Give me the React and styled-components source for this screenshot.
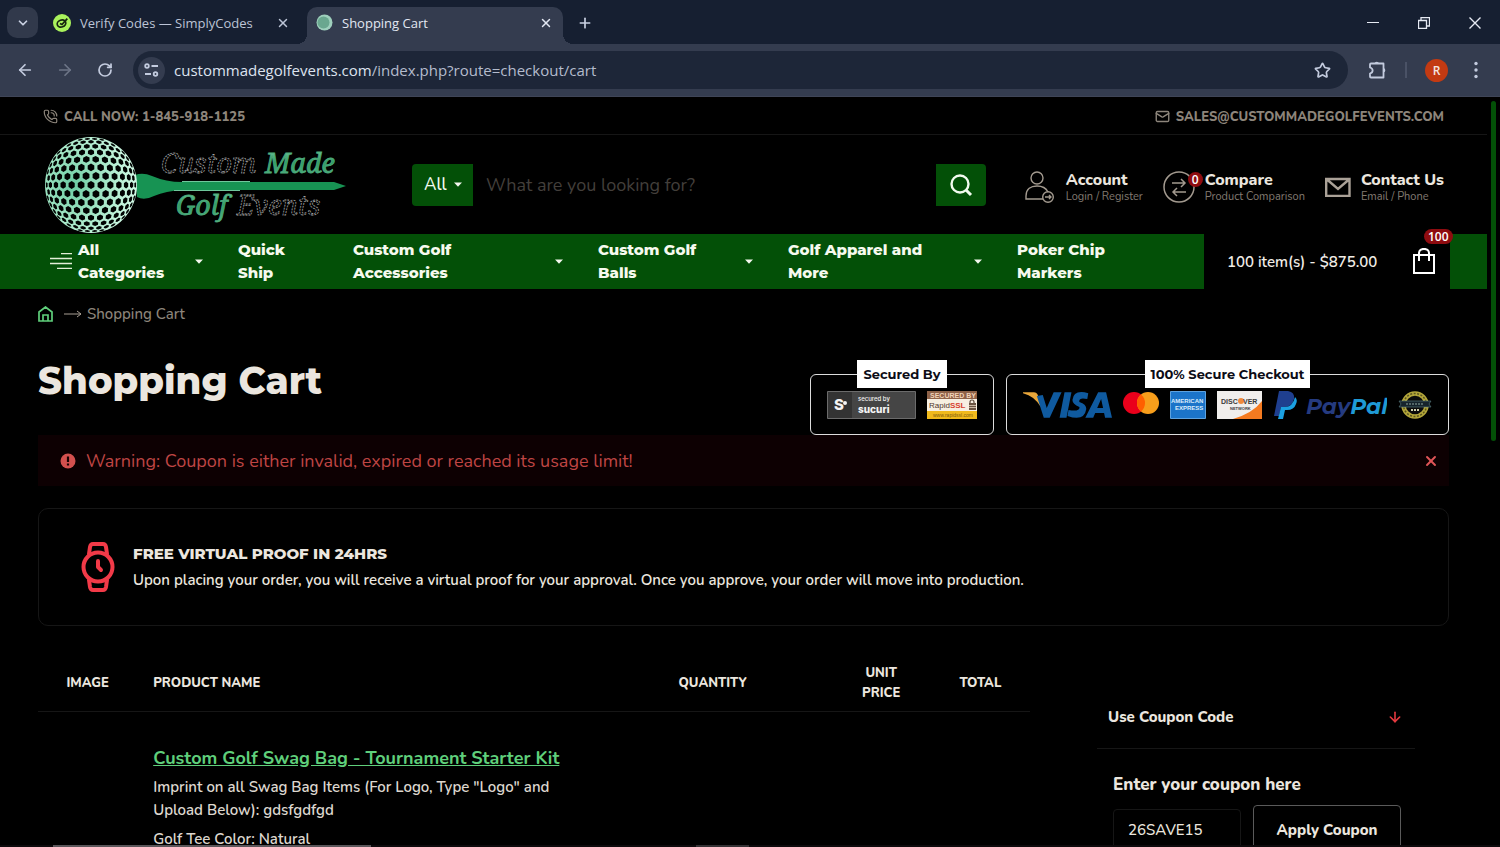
import React, { useState } from "react";
import styled, { createGlobalStyle } from "styled-components";
import {
  ArrowDown,
  ArrowLeft,
  ArrowRight,
  ChevronDown,
  Mail,
  PhoneCall,
  Plus,
  RotateCw,
  Star,
  X,
} from "lucide-react";

const navItems = [
  { lines: ["Quick", "Ship"] },
  { lines: ["Custom Golf", "Accessories"], caret: true },
  { lines: ["Custom Golf", "Balls"], caret: true },
  { lines: ["Golf Apparel and", "More"], caret: true },
  { lines: ["Poker Chip", "Markers"] },
];

// dark hexagons projected onto the ball
function ballCells() {
  const cells = [];
  const R = 46;
  const step = 10;
  const project = (x, y) => {
    const d = Math.hypot(x, y);
    if (d === 0) return [0, 0];
    const a = Math.min(d / R, Math.PI / 2);
    const k = (Math.sin(a) * R) / d;
    return [x * k, y * k];
  };
  for (let row = -9; row <= 9; row++) {
    for (let col = -9; col <= 9; col++) {
      const cx = col * step + (row % 2 ? step / 2 : 0);
      const cy = row * step * 0.87;
      if (Math.hypot(cx, cy) > R * 1.4) continue;
      const pts = [];
      for (let i = 0; i < 6; i++) {
        const t = (Math.PI / 3) * i + Math.PI / 6;
        const p = project(cx + 3.9 * Math.cos(t), cy + 3.9 * Math.sin(t));
        pts.push(`${(p[0] + 47).toFixed(1)},${(p[1] * 1.04 + 49).toFixed(1)}`);
      }
      cells.push(pts.join(" "));
    }
  }
  return cells;
}

function Logo() {
  return (
    <svg width="304" height="98" viewBox="0 0 304 98" role="img" aria-label="Custom Made Golf Events">
      <defs>
        <radialGradient id="ball" cx="0.3" cy="0.5" r="0.7">
          <stop offset="0" stopColor="#6bcca3" />
          <stop offset="0.5" stopColor="#a2e6c5" />
          <stop offset="1" stopColor="#d2fae6" />
        </radialGradient>
        <linearGradient id="lettering" x1="0" y1="0" x2="0" y2="1">
          <stop offset="0" stopColor="#8fd6b3" />
          <stop offset="0.5" stopColor="#2f9c66" />
          <stop offset="1" stopColor="#57b587" />
        </linearGradient>
      </defs>
      <path d="M91 39 Q99 36 108 40 Q122 46 138 46 L290 46 L302 50 L290 54 L138 54 Q122 55 110 60 Q100 65 93 61 Z" fill="#179353" />
      <path d="M138 45.500H206M130 54.500H196" stroke="#6fc79c" />
      <ellipse cx="47" cy="49" rx="46" ry="48" fill="url(#ball)" />
      {ballCells().map((points) => (
        <polygon key={points} points={points} fill="#010302" />
      ))}
      <g fontFamily="'Noto Serif', 'DejaVu Serif', 'Liberation Serif', serif" fontStyle="italic" fontSize="27" strokeWidth="0.8">
        <text x="117" y="37" fill="#000" stroke="#a2a2a2" strokeDasharray="2 1">Custom</text>
        <text x="221" y="37" fill="url(#lettering)" stroke="#4dab7c">Made</text>
        <text x="132" y="79" fill="url(#lettering)" stroke="#4dab7c">Golf</text>
        <text x="193" y="79" fill="#000" stroke="#a2a2a2" strokeDasharray="2 1">Events</text>
      </g>
    </svg>
  );
}

function Caret() {
  return (
    <svg width="8" height="5" viewBox="0 0 8 5" aria-hidden="true">
      <path d="M0 0.500H8L4 4.800Z" fill="#f4f7ee" />
    </svg>
  );
}

function SimplyCodesIcon() {
  return (
    <svg width="18" height="18" viewBox="0 0 18 18" aria-hidden="true">
      <circle cx="9" cy="9" r="9" fill="#a9f25c" />
      <ellipse cx="8.500" cy="9.500" rx="4.400" ry="3.400" transform="rotate(-20 8.500 9.500)" fill="none" stroke="#17260f" strokeWidth="1.700" />
      <path d="M7 9.500L9 10.500L14.300 4.600" fill="none" stroke="#17260f" strokeWidth="1.800" />
    </svg>
  );
}

function PaymentLogos() {
  return (
    <LogoRow>
      <svg width="89" height="28" viewBox="0 0 90 28" role="img" aria-label="Visa">
        <path d="M0 1H11Q14 1 15 4L18 16Q12 5 0 2Z" fill="#e9a63a" />
        <path d="M14 5L21 27H27L39 1H31L24 17L20 4Z" fill="#0f5a9f" />
        <path d="M42 1H49L44 27H37Z" fill="#0f5a9f" />
        <path d="M66 2Q51 -2 50 9Q50 13 57 16Q58 21 46 19L45 25Q62 31 64 18Q64 13 57 11Q56 6 65 8Z" fill="#0f5a9f" />
        <path fillRule="evenodd" d="M63 27L76 1H84L90 27H83L82 22H73L71 27ZM75 17H81L79 8Z" fill="#0f5a9f" />
      </svg>
      <svg width="36" height="28" viewBox="0 0 36 28" role="img" aria-label="Mastercard">
        <circle cx="11" cy="12" r="11" fill="#ea001b" />
        <circle cx="25" cy="12" r="11" fill="#f79e1b" />
        <path d="M18 3.500A11 11 0 0 1 18 20.500A11 11 0 0 1 18 3.500Z" fill="#ff5f00" />
      </svg>
      <svg width="36" height="28" viewBox="0 0 36 28" role="img" aria-label="American Express">
        <path fill="#1b74c9" stroke="#5da2df" d="M0.500 0.500H35.500V27.500H0.500Z" />
        <g fontFamily="'Liberation Sans', sans-serif" fontWeight="bold" fontSize="6" fill="#dcedfb">
          <text x="1" y="12">AMERICAN</text>
          <text x="5" y="19">EXPRESS</text>
        </g>
      </svg>
      <svg width="45" height="28" viewBox="0 0 45 28" role="img" aria-label="Discover">
        <path fill="#f0eeec" d="M0 0H45V28H0Z" />
        <path d="M45 10Q36 22 16 28H45Z" fill="#f47a20" />
        <circle cx="24" cy="10" r="3" fill="#f08a3c" />
        <g fontFamily="'Liberation Sans', sans-serif" fontWeight="bold" fill="#3a3a3a">
          <text x="4" y="13" fontSize="7">DISC</text>
          <text x="26" y="13" fontSize="7">VER</text>
          <text x="13" y="19" fontSize="4">NETWORK</text>
        </g>
      </svg>
      <svg width="114" height="28" viewBox="0 0 114 28" role="img" aria-label="PayPal">
        <path d="M6 0H15Q22 1 21 8Q19 16 11 16H8L6 25H1Z" fill="#1f3f8f" />
        <path d="M22 6Q25 9 23 13Q21 19 14 19H12L10 28H5L6 24L8 16H11Q20 16 22 6Z" fill="#1ba0e2" />
        <text x="33" y="23" fontFamily="Montserrat, Lato, sans-serif" fontWeight="700" fontStyle="italic" fontSize="22" fill="#253b80">
          Pay<tspan fill="#1f9ad6">Pal</tspan>
        </text>
      </svg>
      <svg width="34" height="28" viewBox="0 0 34 28" role="img" aria-label="Secure checkout seal">
        <circle cx="17" cy="14" r="11.500" fill="#0b0b0b" stroke="#b3a63a" strokeWidth="4.500" />
        <circle cx="17" cy="14" r="11.500" fill="none" stroke="#5b551f" strokeWidth="1.500" strokeDasharray="2 1.500" />
        <path d="M1 10H33L31 13L33 16H1L3 13Z" fill="#16242c" stroke="#5f8387" strokeWidth="0.600" />
        <path d="M8 13H26" stroke="#8fa8a0" strokeDasharray="2 1" />
        <path d="M13 19H21" stroke="#cfcfae" strokeWidth="2" strokeDasharray="2 1" />
      </svg>
    </LogoRow>
  );
}

function SecurityLogos() {
  return (
    <LogoRow>
      <svg width="89" height="28" viewBox="0 0 89 28" role="img" aria-label="Secured by Sucuri">
        <path fill="#454545" stroke="#6b6b6b" d="M0.500 0.500H88.500V27.500H0.500Z" />
        <path fill="#333" d="M1 1H25V27H1Z" />
        <g fontFamily="Inter, sans-serif" fontWeight="800" fill="#f4f4f4">
          <text x="7" y="19" fontSize="15">S</text>
          <text x="31" y="10" fontSize="6" fontWeight="500">secured by</text>
          <text x="31" y="22" fontSize="10">sucuri</text>
        </g>
        <circle cx="18" cy="12" r="2" fill="#f4f4f4" />
      </svg>
      <svg width="50" height="28" viewBox="0 0 50 28" role="img" aria-label="Secured by RapidSSL">
        <path fill="#f7efe2" d="M0 0H50V28H0Z" />
        <path fill="#8e6248" d="M0 0H50V8H0Z" />
        <path fill="#f0b91c" d="M0 20H50V28H0Z" />
        <path d="M43 13V11Q43 9 45 9Q47 9 47 11V13" fill="none" stroke="#5e4a3c" strokeWidth="1.200" />
        <path fill="#6b5443" d="M42 12H49V19H42Z" />
        <path d="M42 14.500H49M42 16.500H49" stroke="#cbb8a4" />
        <g fontFamily="'Liberation Sans', sans-serif">
          <text x="3" y="7" fontSize="7" fontWeight="bold" fill="#f1d3b8">SECURED BY</text>
          <text x="2" y="17" fontSize="8" fill="#50352c">Rapid<tspan fill="#d8402f" fontWeight="bold">SSL</tspan></text>
          <text x="6" y="26" fontSize="5" fill="#7d5a10">www.rapidssl.com</text>
        </g>
      </svg>
    </LogoRow>
  );
}

function Browser() {
  return (
    <>
      <TabStrip>
        <TabSearch aria-label="Search tabs"><ChevronDown size={14} strokeWidth={3} /></TabSearch>
        <Tab>
          <SimplyCodesIcon />
          <span>Verify Codes — SimplyCodes</span>
          <IconButton aria-label="Close Verify Codes"><X size={14} strokeWidth={2.5} /></IconButton>
        </Tab>
        <Tab $active>
          <svg width="17" height="17" viewBox="0 0 17 17" aria-hidden="true">
            <circle cx="8.500" cy="8.500" r="8" fill="#9fd0bd" />
            <circle cx="7.500" cy="8.500" r="6" fill="#6aa78f" />
          </svg>
          <span>Shopping Cart</span>
          <IconButton aria-label="Close Shopping Cart"><X size={14} strokeWidth={2.5} /></IconButton>
        </Tab>
        <NewTab aria-label="New tab"><Plus size={16} strokeWidth={2.5} /></NewTab>
        <WindowButtons>
          <button aria-label="Minimize"><svg width="12" height="12"><path d="M0 5.500H12" stroke="currentColor" /></svg></button>
          <button aria-label="Restore">
            <svg width="12" height="12" fill="none" stroke="currentColor"><path d="M0.500 3.500H8.500V11.500H0.500ZM3 3V0.500H11.500V9H9" strokeWidth="1.300" /></svg>
          </button>
          <button aria-label="Close window">
            <svg width="12" height="12" stroke="currentColor" strokeWidth="1.400"><path d="M0.500 0.500L11.500 11.500M11.500 0.500L0.500 11.500" /></svg>
          </button>
        </WindowButtons>
      </TabStrip>
      <Toolbar>
        <ToolButton aria-label="Back"><ArrowLeft size={18} strokeWidth={2.3} /></ToolButton>
        <ToolButton aria-label="Forward" $dim><ArrowRight size={18} strokeWidth={2.3} /></ToolButton>
        <ToolButton aria-label="Reload"><RotateCw size={16} strokeWidth={2.6} /></ToolButton>
        <Omnibox>
          <SiteInfo aria-label="Site information">
            <svg width="15" height="14" viewBox="0 0 15 14" fill="none" stroke="currentColor" strokeWidth="1.800">
              <circle cx="3" cy="3" r="1.800" /><path d="M7.500 3H14M1 11H7" /><circle cx="11.500" cy="11" r="1.800" />
            </svg>
          </SiteInfo>
          <Address>custommadegolfevents.com<span>/index.php?route=checkout/cart</span></Address>
          <IconButton aria-label="Bookmark this tab"><Star size={17} strokeWidth={2.4} /></IconButton>
        </Omnibox>
        <BrowserActions>
          <IconButton aria-label="Extensions">
            <svg width="20" height="20" viewBox="0 0 20 20">
              <path d="M4 3.500H16.500V17.500H4Q3 17.500 3 16.500V13.500C6.500 12.500 6.500 8.500 3 7.500V4.500Q3 3.500 4 3.500Z" fill="none" stroke="currentColor" strokeWidth="1.800" strokeLinejoin="round" />
              <path d="M7.500 3.500A2.300 2.300 0 0 1 12 3.500ZM16.500 8A2.300 2.300 0 0 1 16.500 12.500Z" fill="currentColor" />
            </svg>
          </IconButton>
          <ToolbarDivider />
          <Avatar aria-label="Profile">R</Avatar>
          <IconButton aria-label="Menu">
            <svg width="20" height="18" viewBox="0 0 20 18" fill="currentColor">
              <circle cx="10" cy="2.500" r="1.700" /><circle cx="10" cy="9" r="1.700" /><circle cx="10" cy="15.500" r="1.700" />
            </svg>
          </IconButton>
        </BrowserActions>
      </Toolbar>
    </>
  );
}

function SiteHeader() {
  return (
    <header>
      <TopBar>
        <a href="tel:18459181125"><PhoneCall size={15} strokeWidth={1.9} />CALL NOW: 1-845-918-1125</a>
        <a href="mailto:sales@custommadegolfevents.com"><Mail size={15} strokeWidth={2.2} />SALES@CUSTOMMADEGOLFEVENTS.COM</a>
      </TopBar>
      <HeaderRow>
        <a href="/"><Logo /></a>
        <SearchForm onSubmit={(e) => e.preventDefault()}>
          <CategoryPicker>
            <select aria-label="Search category" defaultValue="All"><option>All</option></select>
            <Caret />
          </CategoryPicker>
          <SearchInput aria-label="Search" placeholder="What are you looking for?" />
          <SearchButton aria-label="Search">
            <svg width="24" height="24" viewBox="0 0 24 24" fill="none" stroke="#f2fbef" strokeWidth="2.400">
              <circle cx="11" cy="11" r="8.500" /><path d="M17 17L22 22" strokeWidth="3" />
            </svg>
          </SearchButton>
        </SearchForm>
        <HeaderLinks>
          <HeaderLink href="#account" $gap={12}>
            <svg width="29" height="34" viewBox="0 0 29 34" fill="none" stroke="#a39a8f" strokeWidth="1.400">
              <circle cx="12" cy="8" r="6" />
              <path d="M18 29H1V26C1 19 6 16 12 16C17 16 21 18 23 22" />
              <circle cx="23" cy="27" r="5.300" />
              <path d="M20 27H26M24 25L26 27L24 29" />
            </svg>
            <span><strong>Account</strong><small>Login / Register</small></span>
          </HeaderLink>
          <HeaderLink href="#compare" $gap={10}>
            <IconWrap>
              <svg width="32" height="34" viewBox="0 0 32 34" fill="none" stroke="#a39a8f" strokeWidth="1.500">
                <circle cx="16" cy="17" r="15" />
                <path d="M9 13H22M18 9L22 13L18 17M23 22H10M14 18L10 22L14 26" />
              </svg>
              <Badge>0</Badge>
            </IconWrap>
            <span><strong>Compare</strong><small>Product Comparison</small></span>
          </HeaderLink>
          <HeaderLink href="#contact" $gap={10}>
            <svg width="26" height="20" viewBox="0 0 26 20" fill="none" stroke="#aaa197" strokeWidth="2.400">
              <path d="M1.200 2H24.500V19H1.200ZM2 2.500L13 12L24 2.500" />
            </svg>
            <span><strong>Contact Us</strong><small>Email / Phone</small></span>
          </HeaderLink>
        </HeaderLinks>
      </HeaderRow>
      <NavBar>
        <NavItems>
          <NavItem href="#categories" $first>
            <svg width="22" height="16" viewBox="0 0 22 16" stroke="#e3efd8" strokeWidth="1.300">
              <path d="M11 0.700H22M0 5.500H22M0 10.500H22M7 15.300H22" />
            </svg>
            <span>All<br />Categories</span>
            <Caret />
          </NavItem>
          {navItems.map((item) => (
            <NavItem key={item.lines.join(" ")} href="#shop">
              <span>{item.lines[0]}<br />{item.lines[1]}</span>
              {item.caret && <Caret />}
            </NavItem>
          ))}
        </NavItems>
        <CartButton>
          <span>100 item(s) - $875.00</span>
          <IconWrap>
            <svg width="24" height="28" viewBox="0 0 24 28" fill="none" stroke="#fff" strokeWidth="2">
              <path d="M2 7H22V25H2ZM7 13V5C7 -0.500 17 -0.500 17 5V13" />
            </svg>
            <Badge $cart>100</Badge>
          </IconWrap>
        </CartButton>
      </NavBar>
    </header>
  );
}

function App() {
  const [coupon, setCoupon] = useState("26SAVE15");
  const [alertOpen, setAlertOpen] = useState(true);

  return (
    <Screen>
      <GlobalStyle />
      <Browser />
      <Viewport>
        <Page>
          <SiteHeader />
          <Main>
            <Breadcrumb aria-label="Breadcrumb">
              <a href="/" aria-label="Home">
                <svg width="15" height="16" viewBox="0 0 15 16" fill="none" stroke="#5fcf7b" strokeWidth="1.700">
                  <path d="M1 6L7.500 1L14 6V15H1ZM5 15V9H10V15" />
                </svg>
              </a>
              <svg width="18" height="8" viewBox="0 0 18 8" fill="none" stroke="#a89f94"><path d="M0 4H17M13 1L17 4L13 7" /></svg>
              <span>Shopping Cart</span>
            </Breadcrumb>
            <TitleRow>
              <h1>Shopping Cart</h1>
              <TrustBoxes>
                <TrustBox><legend>Secured By</legend><SecurityLogos /></TrustBox>
                <TrustBox><legend>100% Secure Checkout</legend><PaymentLogos /></TrustBox>
              </TrustBoxes>
            </TitleRow>
            {alertOpen && (
              <Alert role="alert">
                <svg width="16" height="16" viewBox="0 0 16 16">
                  <circle cx="8" cy="8" r="7.500" fill="#d2504e" />
                  <path d="M8 3.500V9M8 10.500V12.500" stroke="#180203" strokeWidth="2.200" />
                </svg>
                <span>Warning: Coupon is either invalid, expired or reached its usage limit!</span>
                <button aria-label="Dismiss warning" onClick={() => setAlertOpen(false)}><X size={16} strokeWidth={2.8} /></button>
              </Alert>
            )}
            <ProofCard>
              <svg width="34" height="50" viewBox="0 0 34 50" fill="none" stroke="#f23a48" strokeWidth="4" strokeLinecap="round" strokeLinejoin="round">
                <circle cx="17" cy="25" r="14.500" />
                <path d="M8 12L9 5Q9.500 2 12 2H22Q24.500 2 25 5L26 12M8 38L9 45Q9.500 48 12 48H22Q24.500 48 25 45L26 38M17 19V25L20 28" />
              </svg>
              <div>
                <h2>FREE VIRTUAL PROOF IN 24HRS</h2>
                <p>Upon placing your order, you will receive a virtual proof for your approval. Once you approve, your order will move into production.</p>
              </div>
            </ProofCard>
            <CartLayout>
              <CartTable>
                <colgroup>
                  <col width="10%" /><col width="46%" /><col width="24%" /><col width="10%" /><col width="10%" />
                </colgroup>
                <thead>
                  <tr>
                    <th>IMAGE</th>
                    <th className="name">PRODUCT NAME</th>
                    <th>QUANTITY</th>
                    <th>UNIT<br />PRICE</th>
                    <th>TOTAL</th>
                  </tr>
                </thead>
                <tbody>
                  <tr>
                    <td />
                    <td className="name">
                      <ProductLink href="#product">Custom Golf Swag Bag - Tournament Starter Kit</ProductLink>
                      <Option>Imprint on all Swag Bag Items (For Logo, Type "Logo" and Upload Below): gdsfgdfgd</Option>
                      <Option>Golf Tee Color: Natural</Option>
                    </td>
                    <td /><td /><td />
                  </tr>
                </tbody>
              </CartTable>
              <Sidebar>
                <CouponToggle aria-expanded="true">Use Coupon Code<ArrowDown size={16} color="#e5393f" strokeWidth={2.4} /></CouponToggle>
                <CouponForm onSubmit={(e) => e.preventDefault()}>
                  <label htmlFor="coupon">Enter your coupon here</label>
                  <div>
                    <input id="coupon" value={coupon} onChange={(e) => setCoupon(e.target.value)} />
                    <button>Apply Coupon</button>
                  </div>
                </CouponForm>
              </Sidebar>
            </CartLayout>
          </Main>
        </Page>
        <ScrollTrack><div /></ScrollTrack>
      </Viewport>
      <BottomEdge><i /><i /></BottomEdge>
    </Screen>
  );
}

export default App;

const body = `"Nunito", "Open Sans", "Noto Sans", sans-serif`;
const heading = `"Montserrat", Inter, "Open Sans", sans-serif`;
const chrome = `"Segoe UI", "Open Sans", "Noto Sans", sans-serif`;

const GlobalStyle = createGlobalStyle`
  * {
    box-sizing: border-box;
  }
  body {
    margin: 0;
    background: #000;
    color: #ebe6df;
    font-family: ${body};
  }
  a {
    color: inherit;
    text-decoration: none;
  }
  button, input, select {
    font-family: inherit;
    color: inherit;
    background: none;
    border: 0;
    padding: 0;
  }
  h1, h2, p {
    margin: 0;
  }
  svg {
    display: block;
    flex: none;
  }
`;

const Screen = styled.div`
  display: flex;
  flex-direction: column;
  height: 100vh;
  overflow: hidden;
`;

const TabStrip = styled.div`
  display: flex;
  align-items: flex-end;
  flex: none;
  height: 44px;
  padding-left: 7px;
  background: #161f31;
  color: #c9d1e2;
  font-family: ${chrome};
`;

const IconButton = styled.button`
  display: grid;
  place-items: center;
`;

const TabSearch = styled(IconButton)`
  width: 31px;
  height: 31px;
  margin: 0 6px 6px 0;
  border-radius: 10px;
  background: #31394b;
`;

const Tab = styled.div`
  position: relative;
  display: flex;
  align-items: center;
  gap: 9px;
  width: 256px;
  height: 37px;
  margin-right: 7px;
  padding: 0 10px 6px 9px;
  border-radius: 10px 10px 0 0;
  background: ${(p) => (p.$active ? "#343c4f" : "transparent")};
  color: ${(p) => (p.$active ? "#e2e7f2" : "#bcc4d6")};
  font-size: 13px;
  white-space: nowrap;

  span {
    flex: 1;
  }
  &::before,
  &::after {
    content: "";
    display: ${(p) => (p.$active ? "block" : "none")};
    position: absolute;
    bottom: 0;
    width: 10px;
    height: 10px;
  }
  &::before {
    left: -10px;
    background: radial-gradient(circle at 0 0, transparent 10px, #343c4f 10px);
  }
  &::after {
    right: -10px;
    background: radial-gradient(circle at 100% 0, transparent 10px, #343c4f 10px);
  }
`;

const NewTab = styled(IconButton)`
  width: 30px;
  height: 30px;
  margin-bottom: 6px;
`;

const WindowButtons = styled.div`
  display: flex;
  align-self: stretch;
  margin-left: auto;
  padding-top: 2px;
  color: #e6eaf3;

  button {
    display: grid;
    place-items: center;
    width: 51px;
  }
`;

const Toolbar = styled.div`
  display: flex;
  align-items: center;
  flex: none;
  height: 53px;
  padding: 0 14px 0 5px;
  background: #343c4f;
  border-bottom: 1px solid #3f4557;
  color: #c3cbde;
  font-family: ${chrome};
`;

const ToolButton = styled(IconButton)`
  width: 40px;
  height: 40px;
  color: ${(p) => (p.$dim ? "#6d7587" : "#c3cbde")};
`;

const Omnibox = styled.div`
  display: flex;
  align-items: center;
  flex: 1;
  height: 38px;
  margin-left: 8px;
  padding: 0 17px 0 5px;
  border-radius: 19px;
  background: #1d2638;
`;

const SiteInfo = styled(IconButton)`
  width: 27px;
  height: 27px;
  border-radius: 50%;
  background: #343c4f;
`;

const Address = styled.div`
  flex: 1;
  margin-left: 9px;
  color: #dde3ef;
  font-size: 15px;

  span {
    color: #b4bccd;
  }
`;

const BrowserActions = styled.div`
  display: flex;
  align-items: center;
  gap: 18px;
  margin-left: 19px;
`;

const ToolbarDivider = styled.div`
  width: 2px;
  height: 16px;
  background: #4a5266;
`;

const Avatar = styled.button`
  width: 23px;
  height: 23px;
  border-radius: 50%;
  background: #c33a12;
  color: #f5e6e0;
  font-size: 12px;
  font-weight: 600;
`;

const Viewport = styled.div`
  display: flex;
  flex: 1;
  min-height: 0;
`;

const Page = styled.div`
  flex: 1;
  min-width: 0;
  overflow: hidden;
`;

const ScrollTrack = styled.div`
  width: 13px;
  padding: 4px;

  div {
    width: 5px;
    height: 46%;
    border-radius: 3px;
    background: #035007;
  }
`;

const TopBar = styled.div`
  display: flex;
  justify-content: space-between;
  align-items: center;
  height: 38px;
  padding: 2px 43px 0;
  border-bottom: 1px solid #161616;
  color: #8d857b;
  font-size: 13px;
  font-weight: 800;

  a {
    display: flex;
    align-items: center;
    gap: 6px;
  }
`;

const HeaderRow = styled.div`
  display: flex;
  align-items: center;
  height: 99px;
  padding: 0 43px 0 44px;
`;

const SearchForm = styled.form`
  display: flex;
  flex: 1;
  height: 42px;
  margin: 0 39px 0 64px;
`;

const CategoryPicker = styled.div`
  display: flex;
  align-items: center;
  width: 61px;
  padding-left: 12px;
  border-radius: 4px 0 0 4px;
  background: #035007;
  color: #f2fbef;

  select {
    width: 30px;
    appearance: none;
    font-size: 17px;
    font-weight: 500;
  }
`;

const SearchInput = styled.input`
  flex: 1;
  min-width: 0;
  padding: 0 13px;
  font-size: 18px;

  &::placeholder {
    color: #433f3b;
  }
`;

const SearchButton = styled(IconButton)`
  width: 50px;
  border-radius: 0 4px 4px 0;
  background: #035007;
`;

const HeaderLinks = styled.div`
  display: flex;
  gap: 20px;
  padding-top: 4px;
`;

const HeaderLink = styled.a`
  display: flex;
  align-items: center;
  gap: ${(p) => p.$gap}px;
  white-space: nowrap;

  strong,
  small {
    display: block;
  }
  strong {
    font-size: 16px;
    font-weight: 800;
    line-height: 20px;
  }
  small {
    color: #837b72;
    font-size: 11px;
    line-height: 14px;
  }
`;

const IconWrap = styled.div`
  position: relative;
`;

const Badge = styled.span`
  position: absolute;
  top: ${(p) => (p.$cart ? "-19px" : "2px")};
  left: ${(p) => (p.$cart ? "12px" : "25px")};
  min-width: 15px;
  height: 15px;
  padding: ${(p) => (p.$cart ? "0 4px" : "0")};
  border-radius: 8px;
  background: #8e0c10;
  color: #fff;
  font-family: ${chrome};
  font-size: 12px;
  font-weight: 600;
  line-height: 15px;
  text-align: center;
`;

const NavBar = styled.nav`
  display: flex;
  height: 55px;
  padding: 0 37px 0 38px;
  background: #035007;
`;

const NavItems = styled.div`
  display: grid;
  grid-template-columns: 180fr 115fr 245fr 190fr 229fr 207fr;
  flex: 1;
`;

const NavItem = styled.a`
  display: flex;
  align-items: center;
  gap: 6px;
  padding: 0 ${(p) => (p.$first ? "15px 1px 12px" : "15px 1px 20px")};
  color: #f6faee;
  font-family: ${heading};
  font-size: 15px;
  font-weight: 800;
  line-height: 23px;
  white-space: nowrap;

  span {
    flex: 1;
  }
`;

const CartButton = styled.button`
  display: flex;
  justify-content: space-between;
  align-items: center;
  width: 246px;
  padding: 0 14px 0 23px;
  background: #000;
  color: #f0ece6;
  font-size: 15px;
  font-weight: 600;
`;

const Main = styled.main`
  padding: 0 38px;
`;

const Breadcrumb = styled.nav`
  display: flex;
  align-items: center;
  height: 49px;
  color: #8d857b;
  font-size: 15px;
  font-weight: 500;

  a {
    margin-right: 11px;
  }
  span {
    margin-left: 5px;
  }
`;

const TitleRow = styled.div`
  display: flex;
  justify-content: space-between;
  align-items: flex-start;
  padding-top: 22px;

  h1 {
    font-family: ${heading};
    font-size: 37px;
    font-weight: 800;
    line-height: 42px;
  }
`;

const TrustBoxes = styled.div`
  display: flex;
  gap: 12px;
`;

const TrustBox = styled.fieldset`
  height: 75px;
  margin: 0;
  padding: 3px 16px 0;
  border: 1px solid #dcdcdc;
  border-radius: 6px;

  legend {
    margin: 0 auto;
    padding: 0 6px;
    background: #fff;
    color: #0c0c16;
    font-family: ${heading};
    font-size: 13px;
    font-weight: 700;
    line-height: 28px;
  }
`;

const LogoRow = styled.div`
  display: flex;
  gap: 11px;
`;

const Alert = styled.div`
  display: flex;
  align-items: center;
  gap: 10px;
  height: 51px;
  padding: 0 10px 0 22px;
  background: #0d0002;
  color: #bf4544;
  font-size: 18px;

  span {
    flex: 1;
  }
  button {
    color: #e05558;
  }
`;

const ProofCard = styled.section`
  display: flex;
  align-items: center;
  gap: 18px;
  height: 118px;
  margin-top: 22px;
  padding: 0 42px;
  border: 1px solid #161616;
  border-radius: 10px;

  h2 {
    font-family: ${heading};
    font-size: 15px;
    font-weight: 800;
    line-height: 27px;
  }
  p {
    font-size: 15px;
    font-weight: 600;
    line-height: 27px;
  }
`;

const CartLayout = styled.div`
  display: flex;
  align-items: flex-start;
  gap: 67px;
  padding-top: 27px;
`;

const CartTable = styled.table`
  flex: 1;
  table-layout: fixed;
  border-collapse: collapse;

  th {
    height: 58px;
    padding: 2px 0 0;
    border-bottom: 1px solid #161616;
    font-size: 13px;
    font-weight: 800;
    line-height: 20px;
  }
  td {
    padding: 34px 0 0;
    vertical-align: top;
  }
  .name {
    padding-left: 16px;
    padding-right: 32px;
    text-align: left;
  }
`;

const ProductLink = styled.a`
  color: #5fcf7b;
  font-size: 18px;
  font-weight: 700;
  line-height: 24px;
  text-decoration: underline;
  white-space: nowrap;
`;

const Option = styled.p`
  margin-top: 6px;
  color: #ddd7cf;
  font-size: 15px;
  font-weight: 600;
  line-height: 23px;
`;

const Sidebar = styled.aside`
  width: 318px;
  margin: 33px 34px 0 0;
`;

const CouponToggle = styled.button`
  display: flex;
  justify-content: space-between;
  align-items: center;
  width: 100%;
  height: 63px;
  padding: 0 12px 0 11px;
  border-bottom: 1px solid #161616;
  font-size: 15px;
  font-weight: 800;
`;

const CouponForm = styled.form`
  padding: 24px 14px 0 16px;

  label {
    display: block;
    font-size: 17px;
    font-weight: 800;
    line-height: 24px;
  }
  div {
    display: flex;
    align-items: center;
    gap: 12px;
    margin-top: 8px;
  }
  input {
    flex: 1;
    min-width: 0;
    height: 42px;
    padding: 0 14px;
    border: 1px solid #161616;
    border-radius: 4px;
    font-size: 15px;
    font-weight: 500;
  }
  button {
    width: 148px;
    height: 50px;
    border: 1px solid #5a5a5a;
    border-radius: 4px;
    font-size: 15px;
    font-weight: 800;
  }
`;

const BottomEdge = styled.div`
  display: grid;
  grid-template-columns: 53fr 318fr 325fr 53fr 751fr;
  flex: none;
  height: 2px;
  background: #0d0a0c;

  i {
    grid-column: 2;
    background: #5a565a;
  }
  i + i {
    grid-column: 4;
    background: #343134;
  }
`;
